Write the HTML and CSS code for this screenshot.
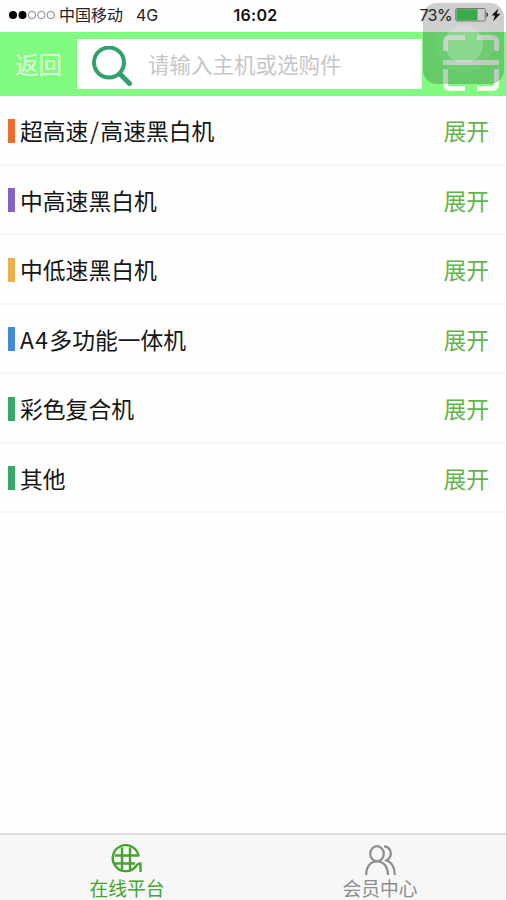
FILE: index.html
```html
<!DOCTYPE html>
<html lang="zh-CN">
<head>
<meta charset="utf-8">
<title>在线平台</title>
<link rel="stylesheet" href="styles.css">
</head>
<body>
<div class="app">
  <div class="status">
    <div class="status-left">
      <svg class="signal" width="48" height="12" viewBox="0 0 48 12"><g fill="#000"><circle cx="5" cy="6" r="4"/><circle cx="14.500" cy="6" r="4"/></g><g fill="none" stroke="#777" stroke-width=".9"><circle cx="24" cy="6" r="3.700"/><circle cx="33.300" cy="6" r="3.700"/><circle cx="42.800" cy="6" r="3.700"/></g></svg>
      <span class="carrier">中国移动</span>
      <span class="network">4G</span>
    </div>
    <div class="time">16:02</div>
    <div class="status-right">
      <span>73%</span>
      <svg class="battery" width="48" height="16" viewBox="0 0 48 16"><rect x=".8" y="1.500" width="29.500" height="12.500" rx="1" fill="none" stroke="#777"/><rect x="1.500" y="2.200" width="21" height="11.200" fill="#36ac4b"/><path d="M31.500 5q3 2.700 0 5.400z" fill="#222"/><path d="M43.500 1.500l-7 7.100h3.500L38 14.500l7.500-7.700h-3.800z" fill="#111"/></svg>
    </div>
  </div>
  <header class="header">
    <a class="back">返回</a>
    <div class="search">
      <svg class="lens" width="42" height="42" viewBox="0 0 42 42" fill="none" stroke="#32a06b"><circle cx="18" cy="16.500" r="15" stroke-width="4"/><path d="M29 28l9.500 9.500" stroke-width="5" stroke-linecap="round"/></svg>
      <span class="placeholder">请输入主机或选购件</span>
    </div>
    <svg class="scan" width="56" height="56" viewBox="0 0 56 56" fill="none" stroke="#f4fff4" stroke-width="5"><path d="M2.500 16V7q0-4.500 4.500-4.500h15M34 2.500h15q4.500 0 4.500 4.500v9M2.500 34v15q0 4.500 4.500 4.500h15M34 53.500h15q4.500 0 4.500-4.500V34M0 27.500h56"/></svg>
  </header>
  <main class="list">
    <div class="row"><i class="bar orange"></i><span class="name">超高速<span class="slash">/</span>高速黑白机</span><a class="toggle">展开</a></div>
    <div class="row"><i class="bar purple"></i><span class="name">中高速黑白机</span><a class="toggle">展开</a></div>
    <div class="row"><i class="bar yellow"></i><span class="name">中低速黑白机</span><a class="toggle">展开</a></div>
    <div class="row"><i class="bar blue"></i><span class="name"><span class="latin">A4</span>多功能一体机</span><a class="toggle">展开</a></div>
    <div class="row"><i class="bar green"></i><span class="name">彩色复合机</span><a class="toggle">展开</a></div>
    <div class="row"><i class="bar green"></i><span class="name">其他</span><a class="toggle">展开</a></div>
  </main>
  <nav class="tabs">
    <a class="tab active">
      <svg width="32" height="32" viewBox="0 0 32 32" fill="none" stroke="#43a52c" stroke-width="2.400" stroke-linejoin="round"><path d="M29.500 28v-8.500c-1.800 0-3 .5-4 2A13 13 0 1 1 27.500 11.500H4M4 19.500h20M11 3.500v24M19 3.500v24"/></svg>
      <span>在线平台</span>
    </a>
    <a class="tab">
      <svg width="32" height="32" viewBox="0 0 32 32" fill="none" stroke="#8d8d8d" stroke-width="2.200"><ellipse cx="13" cy="9.700" rx="6.800" ry="7.500"/><path d="M2.200 31c0-8 4-13.500 10.800-13.500S24 23 24 31M20 2.300c8 .5 9 10.500 2.500 14.200C28 18.500 30.800 24 30.800 31"/></svg>
      <span>会员中心</span>
    </a>
  </nav>
  <div class="touch"><div class="ring"><div class="dot"></div></div></div>
</div>
</body>
</html>
```
FILE: styles.css
```css
* { box-sizing: border-box; }
body {
  margin: 0;
  background: #fff;
  font-family: "Noto Sans CJK SC", sans-serif;
}
.app {
  position: relative;
  width: 507px;
  height: 900px;
  display: flex;
  flex-direction: column;
  border-right: 1px solid #ccc;
  background: #fefefe;
  overflow: hidden;
}
.status {
  position: relative;
  z-index: 2;
  height: 32px;
  flex: none;
  display: grid;
  grid-template-columns: 1fr auto 1fr;
  align-items: center;
  padding: 0 3px 2px 8px;
  font: 16px/28px Inter, "Noto Sans CJK SC", sans-serif;
  color: #222;
}
.status-left, .status-right { display: flex; align-items: center; }
.status-right { justify-content: flex-end; gap: 3px; letter-spacing: -.6px; }
.carrier { margin-left: 3px; }
.network { margin-left: 13px; }
.time { font-weight: 600; color: #111; letter-spacing: .3px; }
.signal, .battery { flex: none; }
.header {
  height: 64px;
  flex: none;
  display: flex;
  align-items: center;
  background: #80fb80;
}
.back {
  width: 77px;
  padding-left: 15px;
  font-size: 23.5px;
  line-height: 34px;
  color: #e0ffdc;
}
.search {
  width: 345px;
  height: 50px;
  display: flex;
  align-items: center;
  padding-left: 14px;
  background: #fff;
}
.lens { margin-top: 5px; }
.placeholder {
  margin: -1px 0 0 15px;
  font-size: 21.5px;
  color: #c6c6c9;
}
.scan { margin: 0 0 2px 21px; flex: none; }
.list { flex: 1; }
.row {
  height: 69.5px;
  display: flex;
  align-items: center;
  padding: 2px 17px 0 8px;
  border-bottom: 2px solid #f5f5f5;
}
.bar { width: 7px; height: 24px; margin-right: 5px; }
.orange { background: #ed6d2d; }
.purple { background: #8262c5; }
.yellow { background: #efae4c; }
.blue { background: #428bdb; }
.green { background: #35a86a; }
.name { flex: 1; font-size: 22.8px; color: #151515; }
.slash { margin: 0 1.5px; }
.latin { letter-spacing: 1.4px; }
.toggle { font-size: 22.8px; color: #63b54b; }
.tabs {
  height: 67px;
  flex: none;
  display: flex;
  background: #f7f7f7;
  border-top: 2px solid #dfdfdf;
}
.tab {
  flex: 1;
  display: flex;
  flex-direction: column;
  align-items: center;
  padding: 9px 0 0 1px;
  font-size: 18.8px;
  line-height: 23px;
  color: #8d8d8d;
}
.active { color: #43a52c; }
.touch {
  position: absolute;
  z-index: 1;
  left: 423px;
  top: 3px;
  width: 81px;
  height: 81px;
  display: grid;
  place-items: center;
  border-radius: 14px;
  background: linear-gradient(rgba(70, 70, 70, .26) 29px, rgba(35, 75, 45, .28) 29px);
}
.ring {
  width: 58px;
  height: 58px;
  display: grid;
  place-items: center;
  border-radius: 50%;
  background: rgba(255, 255, 255, .06);
}
.dot {
  width: 38px;
  height: 38px;
  border-radius: 50%;
  background: rgba(255, 255, 255, .2);
}
```
